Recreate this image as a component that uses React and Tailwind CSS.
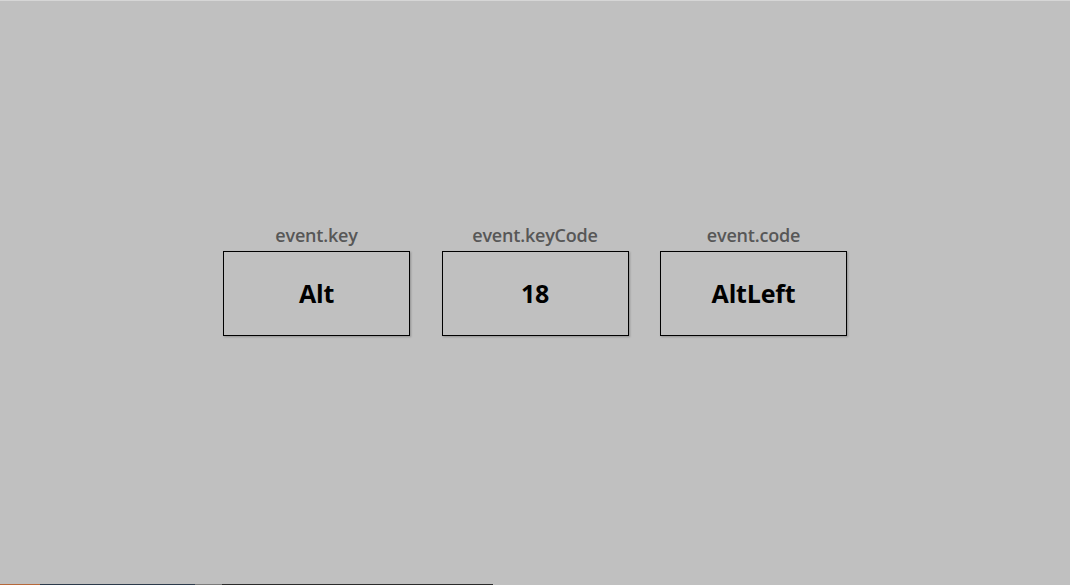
const fields = [
  { label: 'event.key', value: 'Alt' },
  { label: 'event.keyCode', value: '18' },
  { label: 'event.code', value: 'AltLeft' },
];

export default function App() {
  return (
    <div
      className="h-[585px] w-full flex flex-col bg-[#c0c0c0] border-t border-[#d6d6d6]"
      style={{ fontFamily: '"Open Sans", "Noto Sans", "Liberation Sans", sans-serif' }}
    >
      <div className="flex-1 flex justify-center gap-[31.5px] pt-[222px]">
        {fields.map((f) => (
          <div key={f.label} className="flex flex-col items-center">
            <div className="text-[18px] leading-[24px] font-semibold text-[#575757] tracking-[-0.2px]">{f.label}</div>
            <div className="mt-[4px] w-[187px] h-[85px] border border-black flex items-center justify-center shadow-[1px_1px_2px_rgba(0,0,0,0.25)]">
              <span className="text-[25px] font-bold text-black tracking-[-0.2px]">{f.value}</span>
            </div>
          </div>
        ))}
      </div>
      <div className="h-px flex">
        <div className="w-[40px] bg-[#b5673a]" />
        <div className="w-[155px] bg-[#2c3a4a]" />
        <div className="w-[27px] bg-[#7a7a7a]" />
        <div className="w-[271px] bg-[#2a2a2a]" />
      </div>
    </div>
  );
}
